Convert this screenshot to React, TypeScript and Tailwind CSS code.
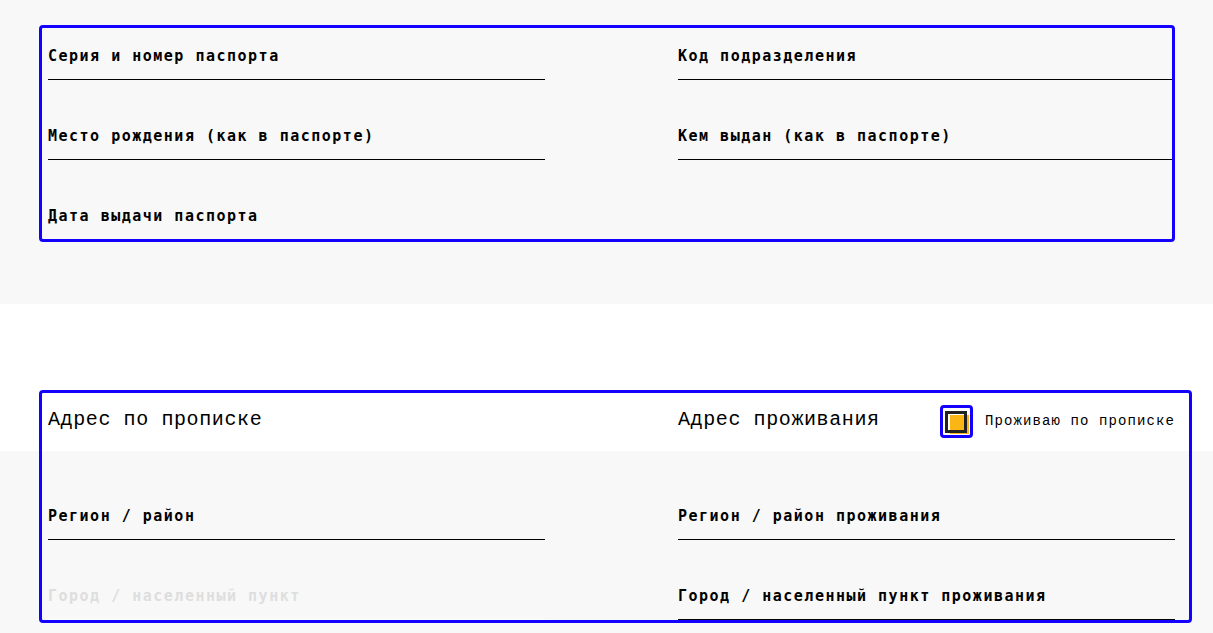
import { ReactNode } from "react";

const label = "font-['DejaVu_Sans_Mono',monospace] font-bold text-[15px] tracking-[1.5px] leading-5 pt-[1px]";
const heading = "font-['Liberation_Mono',monospace] text-[20px] tracking-[0.6px] text-black";

function Field({ title, disabled }: { title: string; disabled?: boolean }) {
  return (
    <div className="flex flex-col">
      <div className={label + (disabled ? " text-[#dedede]" : " text-black")}>{title}</div>
      <div className={"h-[14px] border-b " + (disabled ? "border-white" : "border-black")} />
    </div>
  );
}

function Box({ children, className }: { children: ReactNode; className: string }) {
  return (
    <div className={"ml-[42px] rounded-[1px] outline-[3px] outline-solid outline-[#1400ff] " + className}>
      {children}
    </div>
  );
}

function Checkbox() {
  return (
    <div className="relative h-[27px] w-[27px] rounded-[1px] bg-white outline-[3px] outline-solid outline-[#1400ff]">
      <div className="absolute left-[7px] top-[7px] h-[19px] w-[19px] bg-[#fbb515]" />
      <div className="absolute left-[2px] top-[3px] h-[22px] w-[22px] border-[3px] border-[#222]" />
    </div>
  );
}

export default function App() {
  return (
    <div className="min-h-screen bg-[#f8f8f8]">
      {/* паспорт */}
      <section className="h-[304px] bg-[#f8f8f8] pt-[28px]">
        <Box className="h-[211px] w-[1130px] overflow-hidden">
          <div className="grid grid-cols-[497px_494px] gap-x-[133px] gap-y-[45px] pl-[6px] pt-[17px]">
            <Field title="Серия и номер паспорта" />
            <Field title="Код подразделения" />
            <Field title="Место рождения (как в паспорте)" />
            <Field title="Кем выдан (как в паспорте)" />
            <Field title="Дата выдачи паспорта" />
          </div>
        </Box>
      </section>

      {/* адрес */}
      <section className="bg-[linear-gradient(to_bottom,#ffffff_147px,#f8f8f8_147px)] pt-[89px] pb-10">
        <Box className="h-[227px] w-[1147px]">
          <div className="grid h-[58px] grid-cols-[497px_497px] items-center gap-x-[133px] pb-[4px] pl-[6px]">
            <div className={heading}>Адрес по прописке</div>
            <div className="flex items-center justify-between">
              <div className={heading}>Адрес проживания</div>
              <div className="flex items-center gap-[15px] pt-[2px]">
                <Checkbox />
                <span className="font-['Liberation_Mono',monospace] text-[14px] tracking-[1.1px] text-black">
                  Проживаю по прописке
                </span>
              </div>
            </div>
          </div>
          <div className="grid grid-cols-[497px_497px] gap-x-[133px] gap-y-[45px] pl-[6px] pt-[54px]">
            <Field title="Регион / район" />
            <Field title="Регион / район проживания" />
            <Field title="Город / населенный пункт" disabled />
            <Field title="Город / населенный пункт проживания" />
          </div>
        </Box>
      </section>
    </div>
  );
}
